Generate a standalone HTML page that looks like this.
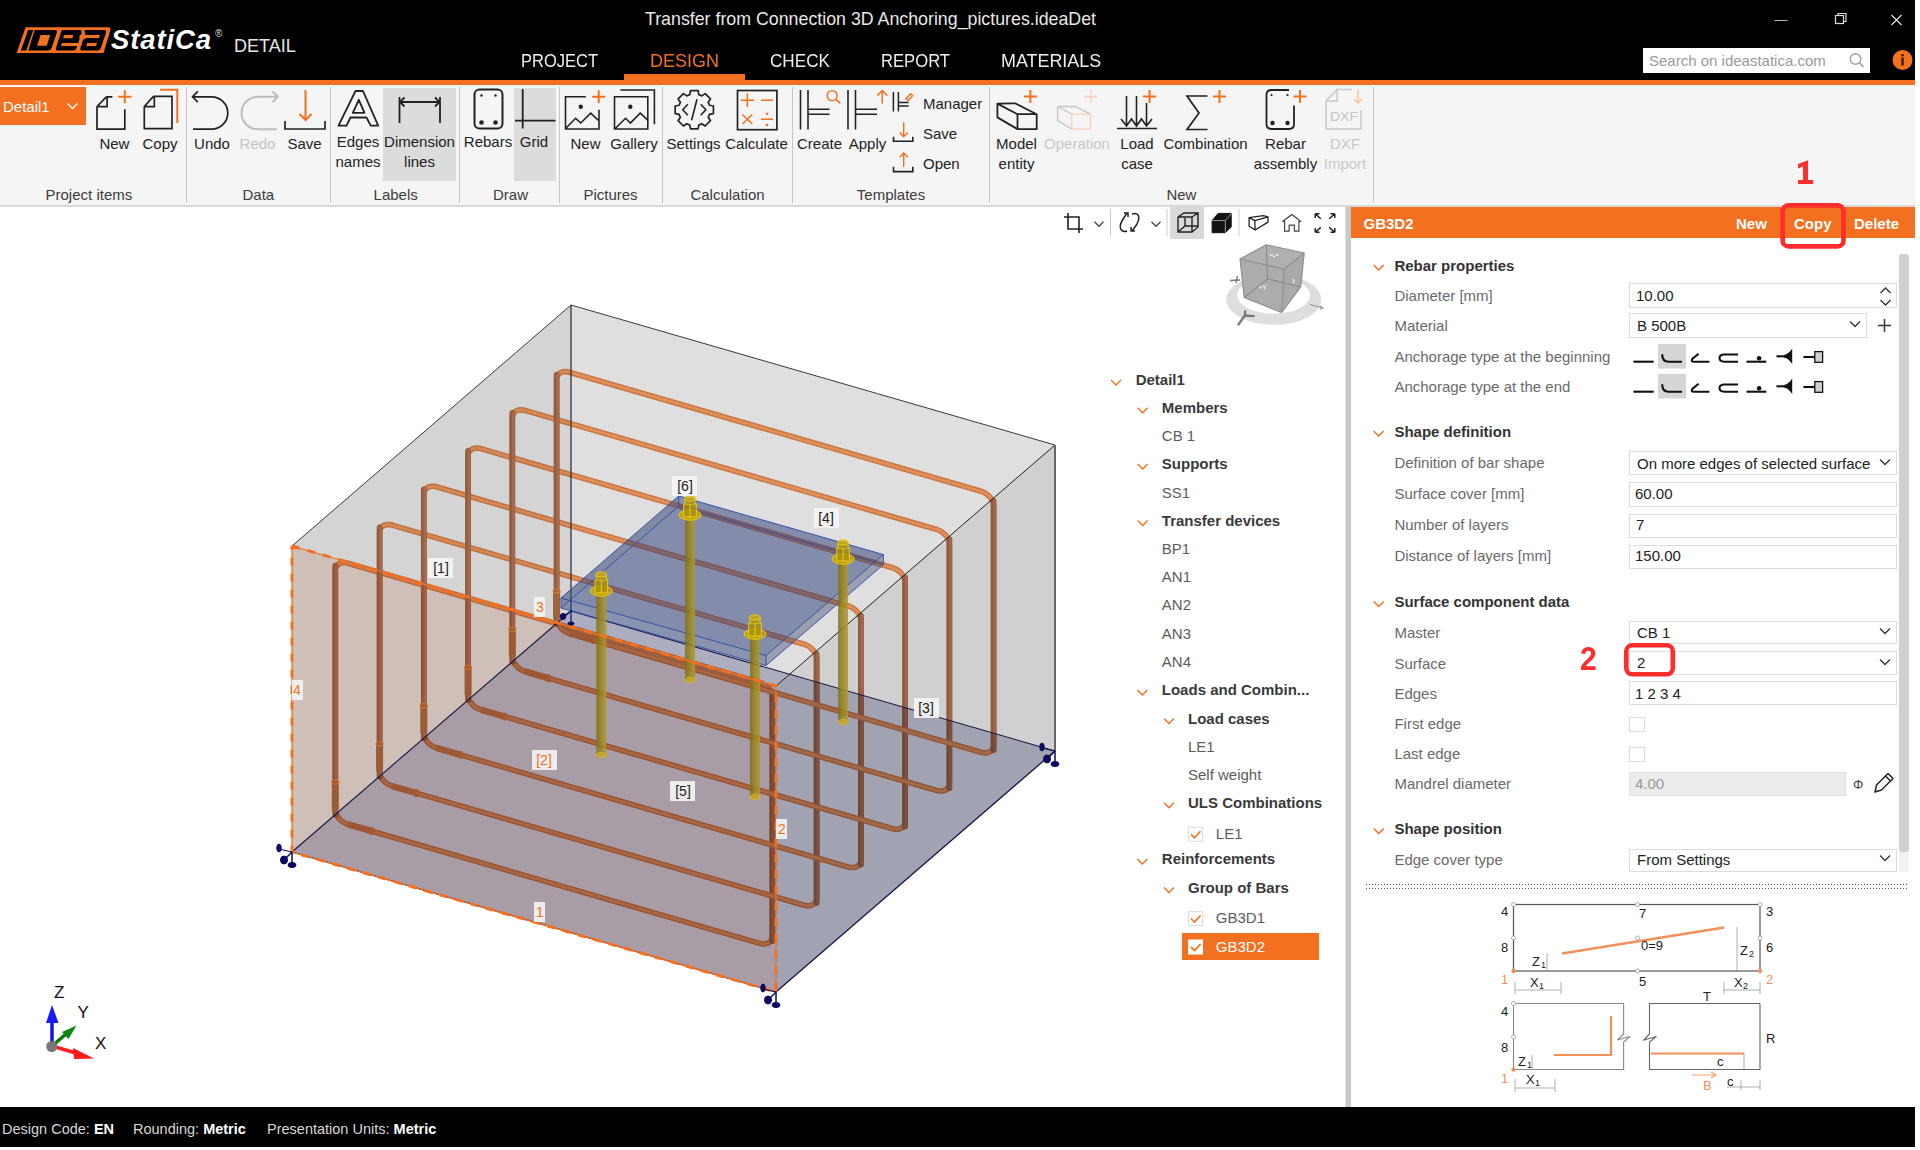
<!DOCTYPE html>
<html><head><meta charset="utf-8"><style>*{box-sizing:border-box;margin:0;padding:0}
html,body{width:1920px;height:1150px;overflow:hidden;background:#fff;font-family:"Liberation Sans",sans-serif}
.a{position:absolute}
.t{position:absolute;white-space:nowrap;line-height:1}
svg{overflow:visible}
</style></head><body>
<div class="a" style="left:0px;top:0px;width:1915px;height:80px;background:#000"></div>
<div class="a" style="left:0px;top:80px;width:1915px;height:5px;background:#f37021"></div>
<svg class="a" style="left:0;top:0" width="320" height="80" viewBox="0 0 320 80">
<path d="M25.6 27.2 L108.5 27.2 Q111.2 27.6 110.3 30.5 L103.5 53 L16.6 53 Z" fill="#f37021"/>
<g fill="#000">
<path d="M28.1 30 L33.3 30 L26.3 50.6 L20.9 50.6 Z"/>
<path d="M34.6 30 L54.8 30 Q57.6 30 56.8 32.8 L51.6 48 Q50.7 50.6 48 50.6 L28.3 50.6 Z"/>
<path d="M59.6 30 L79.6 30 Q82.3 30 81.5 32.8 L76.6 48 Q75.8 50.6 73 50.6 L58 50.6 Q55.2 50.6 56 47.8 L60.6 33.2 Q61.4 30.2 62 30 Z"/>
<path d="M84.4 30 L104 30 Q106.8 30 106 32.8 L100.9 48 Q100.1 50.6 97.4 50.6 L82.4 50.6 Q79.6 50.6 80.4 47.8 L82.6 41 Q83.4 38.4 86 38.4 Z"/>
</g>
<g fill="#f37021">
<path d="M40.6 35 L50.1 35 L46.8 45.7 L37.1 45.7 Z"/>
<path d="M64 35 L73.3 35 L72.3 38.2 L63 38.2 Z"/>
<path d="M62 43.1 L82 43.1 L81 46 L61 46 Z"/>
<path d="M80 35 L100 35 L99 38.1 L79 38.1 Z"/>
<path d="M87.2 43.1 L97 43.1 L96 46 L86.2 46 Z"/>
</g>
</svg>
<div class="t" style="left:111px;top:25.5px;font-size:27.5px;font-weight:bold;font-style:italic;color:#fff;letter-spacing:0.9px">StatiCa</div>
<div class="t" style="left:215px;top:28.5px;font-size:10px;color:#ddd">&#174;</div>
<div class="t" style="left:234.0px;top:36.8px;font-size:18px;color:#e6e6e6;">DETAIL</div>
<div class="t" style="left:645.0px;top:11.4px;font-size:17.8px;color:#e8e8e8;">Transfer from Connection 3D Anchoring_pictures.ideaDet</div>
<div class="t" style="left:521.0px;top:51.6px;font-size:18.5px;color:#eee;transform:scaleX(0.892);transform-origin:0 0">PROJECT</div>
<div class="t" style="left:650.0px;top:51.6px;font-size:18.5px;color:#f37021;transform:scaleX(0.973);transform-origin:0 0">DESIGN</div>
<div class="t" style="left:770.0px;top:51.6px;font-size:18.5px;color:#eee;transform:scaleX(0.926);transform-origin:0 0">CHECK</div>
<div class="t" style="left:881.0px;top:51.6px;font-size:18.5px;color:#eee;transform:scaleX(0.899);transform-origin:0 0">REPORT</div>
<div class="t" style="left:1001.0px;top:51.6px;font-size:18.5px;color:#eee;transform:scaleX(0.968);transform-origin:0 0">MATERIALS</div>
<div class="a" style="left:624px;top:74px;width:121px;height:6px;background:#f37021"></div>
<svg class="a" style="left:1760px;top:0" width="155" height="40">
<line x1="14.5" y1="20.5" x2="27.5" y2="20.5" stroke="#bbb" stroke-width="1"/>
<rect x="75.5" y="15.5" width="8" height="8" fill="none" stroke="#ddd" stroke-width="1.2"/>
<path d="M78 15.5 V13.5 H86 V21.5 H84" fill="none" stroke="#ddd" stroke-width="1.2"/>
<path d="M131.5 15 L141.5 25 M141.5 15 L131.5 25" stroke="#ddd" stroke-width="1.3"/>
</svg>
<div class="a" style="left:1643px;top:48px;width:227px;height:25px;background:#fff"></div>
<div class="t" style="left:1649.0px;top:53.3px;font-size:15px;color:#9a9a9a;">Search on ideastatica.com</div>
<svg class="a" style="left:1840px;top:48px" width="30" height="25">
<circle cx="15.5" cy="11" r="5.3" fill="none" stroke="#a0a0a0" stroke-width="1.4"/>
<line x1="19.3" y1="14.8" x2="23.5" y2="19" stroke="#a0a0a0" stroke-width="1.6"/>
</svg>
<svg class="a" style="left:1890px;top:48px" width="25" height="25">
<circle cx="12.5" cy="12" r="10" fill="#f37021"/>
<rect x="11.3" y="9.5" width="2.4" height="8" fill="#3a1a05"/>
<rect x="11.3" y="6" width="2.4" height="2.2" fill="#3a1a05"/>
</svg>
<div class="a" style="left:0px;top:85px;width:1915px;height:120px;background:#f5f5f5"></div>
<div class="a" style="left:0px;top:205px;width:1915px;height:2px;background:#d9d9d9"></div>
<div class="a" style="left:383px;top:88px;width:73px;height:93px;background:#dcdcdc"></div>
<div class="a" style="left:514px;top:88px;width:42px;height:93px;background:#dcdcdc"></div>
<div class="a" style="left:0px;top:87px;width:86px;height:38px;background:#f37021"></div>
<div class="t" style="left:3.0px;top:99.3px;font-size:15px;color:#fff;">Detail1</div>
<svg class="a" style="left:66px;top:100px" width="14" height="12"><path d="M1.5 3.5 L6.5 8.5 L11.5 3.5" fill="none" stroke="#fff" stroke-width="1.3"/></svg>
<div class="a" style="left:186px;top:87px;width:1px;height:116px;background:#c6c6c6"></div>
<div class="a" style="left:330px;top:87px;width:1px;height:116px;background:#c6c6c6"></div>
<div class="a" style="left:459px;top:87px;width:1px;height:116px;background:#c6c6c6"></div>
<div class="a" style="left:559px;top:87px;width:1px;height:116px;background:#c6c6c6"></div>
<div class="a" style="left:662px;top:87px;width:1px;height:116px;background:#c6c6c6"></div>
<div class="a" style="left:792px;top:87px;width:1px;height:116px;background:#c6c6c6"></div>
<div class="a" style="left:989px;top:87px;width:1px;height:116px;background:#c6c6c6"></div>
<div class="a" style="left:1373px;top:87px;width:1px;height:116px;background:#c6c6c6"></div>
<div class="t" style="left:64.4px;top:135.8px;width:100px;text-align:center;font-size:15px;color:#222;">New</div>
<div class="t" style="left:110.0px;top:135.8px;width:100px;text-align:center;font-size:15px;color:#222;">Copy</div>
<div class="t" style="left:162.0px;top:135.8px;width:100px;text-align:center;font-size:15px;color:#222;">Undo</div>
<div class="t" style="left:207.5px;top:135.8px;width:100px;text-align:center;font-size:15px;color:#c4c4c4;">Redo</div>
<div class="t" style="left:254.5px;top:135.8px;width:100px;text-align:center;font-size:15px;color:#222;">Save</div>
<div class="t" style="left:308.0px;top:133.8px;width:100px;text-align:center;font-size:15px;color:#222;">Edges</div>
<div class="t" style="left:369.5px;top:133.8px;width:100px;text-align:center;font-size:15px;color:#222;">Dimension</div>
<div class="t" style="left:438.0px;top:133.8px;width:100px;text-align:center;font-size:15px;color:#222;">Rebars</div>
<div class="t" style="left:484.0px;top:133.8px;width:100px;text-align:center;font-size:15px;color:#222;">Grid</div>
<div class="t" style="left:535.5px;top:135.8px;width:100px;text-align:center;font-size:15px;color:#222;">New</div>
<div class="t" style="left:584.0px;top:135.8px;width:100px;text-align:center;font-size:15px;color:#222;">Gallery</div>
<div class="t" style="left:643.5px;top:135.8px;width:100px;text-align:center;font-size:15px;color:#222;">Settings</div>
<div class="t" style="left:706.5px;top:135.8px;width:100px;text-align:center;font-size:15px;color:#222;">Calculate</div>
<div class="t" style="left:769.5px;top:135.8px;width:100px;text-align:center;font-size:15px;color:#222;">Create</div>
<div class="t" style="left:817.5px;top:135.8px;width:100px;text-align:center;font-size:15px;color:#222;">Apply</div>
<div class="t" style="left:966.5px;top:135.8px;width:100px;text-align:center;font-size:15px;color:#222;">Model</div>
<div class="t" style="left:1027.0px;top:135.8px;width:100px;text-align:center;font-size:15px;color:#c8c8c8;">Operation</div>
<div class="t" style="left:1087.0px;top:135.8px;width:100px;text-align:center;font-size:15px;color:#222;">Load</div>
<div class="t" style="left:1155.5px;top:135.8px;width:100px;text-align:center;font-size:15px;color:#222;">Combination</div>
<div class="t" style="left:1235.5px;top:135.8px;width:100px;text-align:center;font-size:15px;color:#222;">Rebar</div>
<div class="t" style="left:1295.0px;top:135.8px;width:100px;text-align:center;font-size:15px;color:#c8c8c8;">DXF</div>
<div class="t" style="left:308.0px;top:153.8px;width:100px;text-align:center;font-size:15px;color:#222;">names</div>
<div class="t" style="left:369.5px;top:153.8px;width:100px;text-align:center;font-size:15px;color:#222;">lines</div>
<div class="t" style="left:966.5px;top:155.8px;width:100px;text-align:center;font-size:15px;color:#222;">entity</div>
<div class="t" style="left:1087.0px;top:155.8px;width:100px;text-align:center;font-size:15px;color:#222;">case</div>
<div class="t" style="left:1235.5px;top:155.8px;width:100px;text-align:center;font-size:15px;color:#222;">assembly</div>
<div class="t" style="left:1295.0px;top:155.8px;width:100px;text-align:center;font-size:15px;color:#c8c8c8;">Import</div>
<div class="t" style="left:28.9px;top:187.0px;width:120px;text-align:center;font-size:15px;color:#3c3c3c;">Project items</div>
<div class="t" style="left:198.3px;top:187.0px;width:120px;text-align:center;font-size:15px;color:#3c3c3c;">Data</div>
<div class="t" style="left:335.7px;top:187.0px;width:120px;text-align:center;font-size:15px;color:#3c3c3c;">Labels</div>
<div class="t" style="left:450.5px;top:187.0px;width:120px;text-align:center;font-size:15px;color:#3c3c3c;">Draw</div>
<div class="t" style="left:550.5px;top:187.0px;width:120px;text-align:center;font-size:15px;color:#3c3c3c;">Pictures</div>
<div class="t" style="left:667.5px;top:187.0px;width:120px;text-align:center;font-size:15px;color:#3c3c3c;">Calculation</div>
<div class="t" style="left:831.0px;top:187.0px;width:120px;text-align:center;font-size:15px;color:#3c3c3c;">Templates</div>
<div class="t" style="left:1121.4px;top:187.0px;width:120px;text-align:center;font-size:15px;color:#3c3c3c;">New</div>
<div class="t" style="left:923.0px;top:95.8px;font-size:15px;color:#222;">Manager</div>
<div class="t" style="left:923.0px;top:125.8px;font-size:15px;color:#222;">Save</div>
<div class="t" style="left:923.0px;top:155.8px;font-size:15px;color:#222;">Open</div>
<svg class="a" style="left:0;top:0" width="1400" height="210" fill="none" stroke-linecap="butt">
<g stroke="#222" stroke-width="1.7">
 <path d="M97 106.6 L106.3 96.8 M97 106.6 H107.1 V96.8 M106.3 96.8 H112.4 M124.8 109.2 V129.2 H97 V106.6"/>
 <path d="M144.3 106.6 L153.4 96.4 M144.3 106.6 H154.3 V96.4 M153.4 96.4 H172 V128.7 H144.3 V106.6"/>
 <path d="M193 96.8 H211.6 A16.2 16.2 0 0 1 211.6 129.2 H193 M197.8 91.4 L192.5 96.8 L197.8 102.2"/>
 <path d="M285 121 V129 H325 V121"/>
 <path d="M338.5 125.7 L355.5 91 H363 L378.2 125.7 H370.7 L366.5 117.5 H350.5 L346.5 125.7 Z M352.8 112.8 L358.8 99.8 L364.5 112.8 Z" stroke-width="1.8" stroke-linejoin="round"/>
 <path d="M399.5 97 V123 M440 97 V123 M400 102 H439.5 M404.5 97.5 L400 102 L404.5 106.5 M435 97.5 L439.5 102 L435 106.5" stroke-width="1.8"/>
 <rect x="474.5" y="89.5" width="28" height="39" rx="5" stroke-width="2"/>
 <path d="M522.7 89 V128.5 M515 120.7 H555.5" stroke-width="1.8"/>
 <path d="M585.9 96.8 H565.5 V129 H599 V109.8 M565.6 128.5 L575.6 118.3 L580.8 123 L590.7 113.1 L598.5 120.4" stroke-width="1.6"/>
 <path d="M614.5 96.8 H647.8 V129 H614.5 Z M615.2 128.5 L625.6 118.3 L630.3 123 L640.2 113.1 L648 120.4 M620.4 90 H654.4 V124.3" stroke-width="1.6"/>
 <rect x="737.5" y="90.5" width="39.4" height="39.2"/>
 <path d="M800.5 90 V129.5 M808 90 V129.5 M808.5 109.3 H829.5 M808.5 114.3 H829.5" stroke-width="1.6"/>
 <path d="M848 90 V129.5 M855.5 90 V129.5 M856 109.3 H877 M856 114.3 H877" stroke-width="1.6"/>
 <path d="M893.4 92 V111.6 M898.4 92 V111.6 M898.9 102.6 H908.6 M898.9 106.1 H908.6" stroke-width="1.5"/>
 <path d="M893.5 136.8 V141.3 H912.8 V136.8 M893.5 166.8 V171.6 H912.8 V166.8" stroke-width="1.6"/>
 <path d="M997.4 103.6 L1015.2 103.3 L1036.7 114.2 V129.1 H1017.5 L997.4 117.4 Z M997.4 103.6 L1017.5 114.2 H1036.7 M1017.5 114.2 V129.1" stroke-width="1.8" stroke-linejoin="round"/>
 <path d="M1117 128.5 H1157 M1126.5 96 V126 M1136.5 96 V126 M1146.5 103 V126 M1121 119 L1126.5 126 L1131.5 119 L1136.5 126 L1141.5 119 L1146.5 126 L1152 119" stroke-width="1.6"/>
 <path d="M1207.5 96 H1187 L1199 113 L1187 129.5 H1207.5" stroke-width="1.7"/>
 <path d="M1289 90 H1271.5 Q1266.5 90 1266.5 95 V124 Q1266.5 129 1271.5 129 H1289 Q1294 129 1294 124 V105.5" stroke-width="1.8"/>
</g>
<g fill="#222"><circle cx="1271.5" cy="95" r="1.1"/><circle cx="1287.5" cy="95" r="1.1"/><circle cx="1272.5" cy="123" r="2.2"/><circle cx="1287.5" cy="123" r="2.2"/>
<circle cx="481.5" cy="95.5" r="1.2"/><circle cx="495.5" cy="95.5" r="1.2"/><circle cx="481.5" cy="122.5" r="2.3"/><circle cx="495.5" cy="122.5" r="2.3"/>
<circle cx="580.8" cy="106.7" r="2.2"/><circle cx="630.3" cy="106.7" r="2.2"/></g>
<g stroke="#bdbdbd" stroke-width="2"><path d="M277 129.2 H257.7 A16.2 16.2 0 0 1 257.7 96.8 H277.5 M272.5 91.4 L277.8 96.8 L272.5 102.2"/></g>
<g stroke="#f37021" stroke-width="2">
 <path d="M118.3 96.8 H131.4 M124.8 90.3 V103.3"/>
 <path d="M160 89.7 H177.3 V123"/>
 <path d="M305.5 90 V120 M299.5 114 L305.5 120 L311.5 114"/>
 <path d="M592.2 96.8 H605.2 M598.7 90.3 V103.3"/>
 <path d="M740.6 100.3 H754.1 M747.3 93.5 V107 M761 100.3 H773 M742.4 114.5 L752.3 124 M752.3 114.5 L742.4 124 M761 119.3 H773" stroke-width="1.5"/>
 <path d="M1023.9 96.5 H1036.9 M1030.4 90 V103" />
 <path d="M1143 96.5 H1156 M1149.5 90 V103"/>
 <path d="M1213 96.5 H1226 M1219.5 90 V103"/>
 <path d="M1293.5 96.5 H1306.5 M1300 90 V103"/>
 <path d="M882.2 90.5 V103.5 M877.2 95.6 L882.2 90.5 L887.4 95.6" stroke-width="1.5"/>
 <path d="M903.7 122.2 V136.8 M899.7 132.5 L903.7 136.8 L907.7 132.5 M903.7 153 V167 M899.7 157.3 L903.7 153 L907.7 157.3" stroke-width="1.4"/>
 <path d="M906 98.7 L910.5 93.8 L912.6 95.8 L908.2 100.6 Z" stroke-width="1.4"/>
</g>
<g fill="#f37021"><circle cx="767" cy="113.7" r="1.3"/><circle cx="767" cy="125" r="1.3"/></g>
<circle cx="832.2" cy="95.6" r="5" stroke="#f37021" stroke-width="1.4"/><line x1="835.9" y1="99.4" x2="840.4" y2="103.4" stroke="#f37021" stroke-width="1.5"/>
<g stroke="#c4c4c4" stroke-width="1.3"><path d="M1071.8 129.1 L1057.6 120.5 V106.5 H1075.4 L1090.5 114.2 M1057.6 106.5 L1071.8 114.2"/></g>
<g stroke="#f8d0b8" stroke-width="1.3"><path d="M1071.8 114.2 H1090.5 V129.1 H1071.8 Z" /><path d="M1084.4 96.5 H1097.4 M1090.9 90 V103"/></g>
<g stroke="#c9c9c9" stroke-width="1.5"><path d="M1337 89.5 H1352 M1326 101 L1337 89.5 V101 H1326 V129 H1361 V110"/></g>
<text x="1330" y="121" font-family="Liberation Sans" font-size="13" fill="#c4c4c4" stroke="none" textLength="28" lengthAdjust="spacingAndGlyphs">DXF</text>
<g stroke="#f8c0a0" stroke-width="1.5"><path d="M1358 90 V103 M1354 99 L1358 103 L1362 99"/></g>
</svg>
<svg class="a" style="left:0;top:0" width="800" height="210" fill="none">
<path d="M688.25 95.20 L689.76 94.66 L690.52 90.67 L698.08 90.67 L698.84 94.66 L700.35 95.20 L701.80 95.89 L705.16 93.60 L710.50 98.94 L708.21 102.30 L708.90 103.75 L709.44 105.26 L713.43 106.02 L713.43 113.58 L709.44 114.34 L708.90 115.85 L708.21 117.30 L710.50 120.66 L705.16 126.00 L701.80 123.71 L700.35 124.40 L698.84 124.94 L698.08 128.93 L690.52 128.93 L689.76 124.94 L688.25 124.40 L686.80 123.71 L683.44 126.00 L678.10 120.66 L680.39 117.30 L679.70 115.85 L679.16 114.34 L675.17 113.58 L675.17 106.02 L679.16 105.26 L679.70 103.75 L680.39 102.30 L678.10 98.94 L683.44 93.60 L686.80 95.89 Z" stroke="#222" stroke-width="1.7" stroke-linejoin="round"/>
<path d="M687.8 104.3 L682.8 109.8 L687.8 115.3 M700.8 104.3 L705.8 109.8 L700.8 115.3 M697.0 99.3 L691.5999999999999 120.3" stroke="#222" stroke-width="1.6"/>
</svg>
<div class="a" style="left:0px;top:207px;width:1345px;height:900px;background:#fff"></div>
<svg class="a" style="left:0;top:207px" width="1345" height="900" viewBox="0 207 1345 900">
<g style="isolation:isolate">
<path d="M335.3 570.7 L335.6 568.6 L336.3 566.7 L337.5 565.2 L339.0 563.9 L340.9 563.1 L343.1 562.7 L345.5 562.8 L347.9 563.3 L759.8 682.4 L762.3 683.3 L764.6 684.7 L766.8 686.3 L768.7 688.2 L770.3 690.3 L771.4 692.6 L772.2 694.9 L772.4 697.1 L772.4 936.1 L772.2 938.1 L771.4 940.0 L770.3 941.6 L768.7 942.8 L766.8 943.6 L764.6 944.0 L762.3 943.9 L759.8 943.4 L347.9 824.3 L345.5 823.4 L343.1 822.1 L340.9 820.4 L339.0 818.5 L337.5 816.4 L336.3 814.1 L335.6 811.9 L335.3 809.6 Z" fill="none" stroke="#e8874d" stroke-width="5.6" stroke-linejoin="round"/>
<path d="M335.3 570.7 L335.6 568.6 L336.3 566.7 L337.5 565.2 L339.0 563.9 L340.9 563.1 L343.1 562.7 L345.5 562.8 L347.9 563.3 L759.8 682.4 L762.3 683.3 L764.6 684.7 L766.8 686.3 L768.7 688.2 L770.3 690.3 L771.4 692.6 L772.2 694.9 L772.4 697.1 L772.4 936.1 L772.2 938.1 L771.4 940.0 L770.3 941.6 L768.7 942.8 L766.8 943.6 L764.6 944.0 L762.3 943.9 L759.8 943.4 L347.9 824.3 L345.5 823.4 L343.1 822.1 L340.9 820.4 L339.0 818.5 L337.5 816.4 L336.3 814.1 L335.6 811.9 L335.3 809.6 Z" fill="none" stroke="#ffa466" stroke-width="2.8" stroke-linejoin="round"/>
<path d="M335.3 814.6 L335.3 565.7" fill="none" stroke="#b0704c" stroke-width="5.8" stroke-linecap="round"/>
<path d="M336.3 814.6 L336.3 565.7" fill="none" stroke="#c88060" stroke-width="2.5" stroke-linecap="round"/>
<path d="M772.4 941.0 L772.4 692.1" fill="none" stroke="#b0704c" stroke-width="5.8" stroke-linecap="round"/>
<path d="M773.4 941.0 L773.4 692.1" fill="none" stroke="#c88060" stroke-width="2.5" stroke-linecap="round"/>
<path d="M335.3 809.6 L335.3 782.1" fill="none" stroke="#c07848" stroke-width="7"/>
<path d="M347.9 824.3 L371.9 831.2" fill="none" stroke="#f08c50" stroke-width="6.5"/>
<ellipse cx="371.9" cy="831.2" rx="2" ry="3.5" fill="none" stroke="#ff9040" stroke-width="1.2"/>
<ellipse cx="335.3" cy="782.1" rx="3.5" ry="2" fill="none" stroke="#ff9040" stroke-width="1.2"/>
<path d="M379.6 532.4 L379.8 530.4 L380.5 528.5 L381.7 526.9 L383.3 525.7 L385.2 524.9 L387.4 524.5 L389.7 524.6 L392.2 525.1 L804.1 644.2 L806.5 645.1 L808.9 646.4 L811.0 648.1 L813.0 650.0 L814.5 652.1 L815.7 654.4 L816.4 656.6 L816.6 658.9 L816.6 897.8 L816.4 899.9 L815.7 901.8 L814.5 903.3 L813.0 904.6 L811.0 905.4 L808.9 905.8 L806.5 905.7 L804.1 905.2 L392.2 786.1 L389.7 785.2 L387.4 783.8 L385.2 782.2 L383.3 780.3 L381.7 778.2 L380.5 775.9 L379.8 773.6 L379.6 771.4 Z" fill="none" stroke="#e8874d" stroke-width="5.6" stroke-linejoin="round"/>
<path d="M379.6 532.4 L379.8 530.4 L380.5 528.5 L381.7 526.9 L383.3 525.7 L385.2 524.9 L387.4 524.5 L389.7 524.6 L392.2 525.1 L804.1 644.2 L806.5 645.1 L808.9 646.4 L811.0 648.1 L813.0 650.0 L814.5 652.1 L815.7 654.4 L816.4 656.6 L816.6 658.9 L816.6 897.8 L816.4 899.9 L815.7 901.8 L814.5 903.3 L813.0 904.6 L811.0 905.4 L808.9 905.8 L806.5 905.7 L804.1 905.2 L392.2 786.1 L389.7 785.2 L387.4 783.8 L385.2 782.2 L383.3 780.3 L381.7 778.2 L380.5 775.9 L379.8 773.6 L379.6 771.4 Z" fill="none" stroke="#ffa466" stroke-width="2.8" stroke-linejoin="round"/>
<path d="M379.6 776.4 L379.6 527.5" fill="none" stroke="#b0704c" stroke-width="5.8" stroke-linecap="round"/>
<path d="M380.6 776.4 L380.6 527.5" fill="none" stroke="#c88060" stroke-width="2.5" stroke-linecap="round"/>
<path d="M816.6 902.8 L816.6 653.9" fill="none" stroke="#b0704c" stroke-width="5.8" stroke-linecap="round"/>
<path d="M817.6 902.8 L817.6 653.9" fill="none" stroke="#c88060" stroke-width="2.5" stroke-linecap="round"/>
<path d="M379.6 771.4 L379.6 743.9" fill="none" stroke="#c07848" stroke-width="7"/>
<path d="M392.2 786.1 L416.1 793.0" fill="none" stroke="#f08c50" stroke-width="6.5"/>
<ellipse cx="416.1" cy="793.0" rx="2" ry="3.5" fill="none" stroke="#ff9040" stroke-width="1.2"/>
<ellipse cx="379.6" cy="743.9" rx="3.5" ry="2" fill="none" stroke="#ff9040" stroke-width="1.2"/>
<path d="M423.8 494.2 L424.1 492.1 L424.8 490.3 L426.0 488.7 L427.5 487.5 L429.4 486.7 L431.6 486.3 L434.0 486.3 L436.4 486.8 L848.3 606.0 L850.8 606.9 L853.1 608.2 L855.3 609.9 L857.2 611.8 L858.8 613.9 L859.9 616.1 L860.6 618.4 L860.9 620.6 L860.9 859.6 L860.6 861.7 L859.9 863.6 L858.8 865.1 L857.2 866.3 L855.3 867.2 L853.1 867.5 L850.8 867.5 L848.3 867.0 L436.4 747.9 L434.0 746.9 L431.6 745.6 L429.4 744.0 L427.5 742.1 L426.0 739.9 L424.8 737.7 L424.1 735.4 L423.8 733.2 Z" fill="none" stroke="#e8874d" stroke-width="5.6" stroke-linejoin="round"/>
<path d="M423.8 494.2 L424.1 492.1 L424.8 490.3 L426.0 488.7 L427.5 487.5 L429.4 486.7 L431.6 486.3 L434.0 486.3 L436.4 486.8 L848.3 606.0 L850.8 606.9 L853.1 608.2 L855.3 609.9 L857.2 611.8 L858.8 613.9 L859.9 616.1 L860.6 618.4 L860.9 620.6 L860.9 859.6 L860.6 861.7 L859.9 863.6 L858.8 865.1 L857.2 866.3 L855.3 867.2 L853.1 867.5 L850.8 867.5 L848.3 867.0 L436.4 747.9 L434.0 746.9 L431.6 745.6 L429.4 744.0 L427.5 742.1 L426.0 739.9 L424.8 737.7 L424.1 735.4 L423.8 733.2 Z" fill="none" stroke="#ffa466" stroke-width="2.8" stroke-linejoin="round"/>
<path d="M423.8 738.2 L423.8 489.3" fill="none" stroke="#b0704c" stroke-width="5.8" stroke-linecap="round"/>
<path d="M424.8 738.2 L424.8 489.3" fill="none" stroke="#c88060" stroke-width="2.5" stroke-linecap="round"/>
<path d="M860.9 864.6 L860.9 615.7" fill="none" stroke="#b0704c" stroke-width="5.8" stroke-linecap="round"/>
<path d="M861.9 864.6 L861.9 615.7" fill="none" stroke="#c88060" stroke-width="2.5" stroke-linecap="round"/>
<path d="M423.8 733.2 L423.8 705.7" fill="none" stroke="#c07848" stroke-width="7"/>
<path d="M436.4 747.9 L460.4 754.8" fill="none" stroke="#f08c50" stroke-width="6.5"/>
<ellipse cx="460.4" cy="754.8" rx="2" ry="3.5" fill="none" stroke="#ff9040" stroke-width="1.2"/>
<ellipse cx="423.8" cy="705.7" rx="3.5" ry="2" fill="none" stroke="#ff9040" stroke-width="1.2"/>
<path d="M468.1 456.0 L468.3 453.9 L469.0 452.1 L470.2 450.5 L471.8 449.3 L473.7 448.4 L475.9 448.1 L478.2 448.1 L480.7 448.6 L892.6 567.8 L895.0 568.7 L897.4 570.0 L899.5 571.6 L901.5 573.6 L903.0 575.7 L904.2 577.9 L904.9 580.2 L905.1 582.4 L905.1 821.4 L904.9 823.5 L904.2 825.3 L903.0 826.9 L901.5 828.1 L899.5 828.9 L897.4 829.3 L895.0 829.3 L892.6 828.8 L480.7 709.6 L478.2 708.7 L475.9 707.4 L473.7 705.8 L471.8 703.8 L470.2 701.7 L469.0 699.5 L468.3 697.2 L468.1 695.0 Z" fill="none" stroke="#e8874d" stroke-width="5.6" stroke-linejoin="round"/>
<path d="M468.1 456.0 L468.3 453.9 L469.0 452.1 L470.2 450.5 L471.8 449.3 L473.7 448.4 L475.9 448.1 L478.2 448.1 L480.7 448.6 L892.6 567.8 L895.0 568.7 L897.4 570.0 L899.5 571.6 L901.5 573.6 L903.0 575.7 L904.2 577.9 L904.9 580.2 L905.1 582.4 L905.1 821.4 L904.9 823.5 L904.2 825.3 L903.0 826.9 L901.5 828.1 L899.5 828.9 L897.4 829.3 L895.0 829.3 L892.6 828.8 L480.7 709.6 L478.2 708.7 L475.9 707.4 L473.7 705.8 L471.8 703.8 L470.2 701.7 L469.0 699.5 L468.3 697.2 L468.1 695.0 Z" fill="none" stroke="#ffa466" stroke-width="2.8" stroke-linejoin="round"/>
<path d="M468.1 699.9 L468.1 451.0" fill="none" stroke="#b0704c" stroke-width="5.8" stroke-linecap="round"/>
<path d="M469.1 699.9 L469.1 451.0" fill="none" stroke="#c88060" stroke-width="2.5" stroke-linecap="round"/>
<path d="M905.1 826.4 L905.1 577.5" fill="none" stroke="#b0704c" stroke-width="5.8" stroke-linecap="round"/>
<path d="M906.1 826.4 L906.1 577.5" fill="none" stroke="#c88060" stroke-width="2.5" stroke-linecap="round"/>
<path d="M468.1 695.0 L468.1 667.4" fill="none" stroke="#c07848" stroke-width="7"/>
<path d="M480.7 709.6 L504.6 716.6" fill="none" stroke="#f08c50" stroke-width="6.5"/>
<ellipse cx="504.6" cy="716.6" rx="2" ry="3.5" fill="none" stroke="#ff9040" stroke-width="1.2"/>
<ellipse cx="468.1" cy="667.4" rx="3.5" ry="2" fill="none" stroke="#ff9040" stroke-width="1.2"/>
<path d="M512.3 417.8 L512.6 415.7 L513.3 413.8 L514.5 412.3 L516.0 411.0 L517.9 410.2 L520.1 409.8 L522.5 409.9 L524.9 410.4 L936.8 529.5 L939.3 530.5 L941.6 531.8 L943.8 533.4 L945.7 535.3 L947.3 537.5 L948.4 539.7 L949.1 542.0 L949.4 544.2 L949.4 783.2 L949.1 785.3 L948.4 787.1 L947.3 788.7 L945.7 789.9 L943.8 790.7 L941.6 791.1 L939.3 791.0 L936.8 790.5 L524.9 671.4 L522.5 670.5 L520.1 669.2 L517.9 667.5 L516.0 665.6 L514.5 663.5 L513.3 661.2 L512.6 659.0 L512.3 656.8 Z" fill="none" stroke="#e8874d" stroke-width="5.6" stroke-linejoin="round"/>
<path d="M512.3 417.8 L512.6 415.7 L513.3 413.8 L514.5 412.3 L516.0 411.0 L517.9 410.2 L520.1 409.8 L522.5 409.9 L524.9 410.4 L936.8 529.5 L939.3 530.5 L941.6 531.8 L943.8 533.4 L945.7 535.3 L947.3 537.5 L948.4 539.7 L949.1 542.0 L949.4 544.2 L949.4 783.2 L949.1 785.3 L948.4 787.1 L947.3 788.7 L945.7 789.9 L943.8 790.7 L941.6 791.1 L939.3 791.0 L936.8 790.5 L524.9 671.4 L522.5 670.5 L520.1 669.2 L517.9 667.5 L516.0 665.6 L514.5 663.5 L513.3 661.2 L512.6 659.0 L512.3 656.8 Z" fill="none" stroke="#ffa466" stroke-width="2.8" stroke-linejoin="round"/>
<path d="M512.3 661.7 L512.3 412.8" fill="none" stroke="#b0704c" stroke-width="5.8" stroke-linecap="round"/>
<path d="M513.3 661.7 L513.3 412.8" fill="none" stroke="#c88060" stroke-width="2.5" stroke-linecap="round"/>
<path d="M949.4 788.1 L949.4 539.2" fill="none" stroke="#b0704c" stroke-width="5.8" stroke-linecap="round"/>
<path d="M950.4 788.1 L950.4 539.2" fill="none" stroke="#c88060" stroke-width="2.5" stroke-linecap="round"/>
<path d="M512.3 656.8 L512.3 629.2" fill="none" stroke="#c07848" stroke-width="7"/>
<path d="M524.9 671.4 L548.9 678.3" fill="none" stroke="#f08c50" stroke-width="6.5"/>
<ellipse cx="548.9" cy="678.3" rx="2" ry="3.5" fill="none" stroke="#ff9040" stroke-width="1.2"/>
<ellipse cx="512.3" cy="629.2" rx="3.5" ry="2" fill="none" stroke="#ff9040" stroke-width="1.2"/>
<path d="M556.6 379.5 L556.8 377.5 L557.5 375.6 L558.7 374.0 L560.3 372.8 L562.2 372.0 L564.4 371.6 L566.7 371.7 L569.2 372.2 L981.1 491.3 L983.5 492.2 L985.9 493.5 L988.0 495.2 L990.0 497.1 L991.5 499.2 L992.7 501.5 L993.4 503.7 L993.6 506.0 L993.6 745.0 L993.4 747.0 L992.7 748.9 L991.5 750.5 L990.0 751.7 L988.0 752.5 L985.9 752.9 L983.5 752.8 L981.1 752.3 L569.2 633.2 L566.7 632.3 L564.4 631.0 L562.2 629.3 L560.3 627.4 L558.7 625.3 L557.5 623.0 L556.8 620.8 L556.6 618.5 Z" fill="none" stroke="#e8874d" stroke-width="5.6" stroke-linejoin="round"/>
<path d="M556.6 379.5 L556.8 377.5 L557.5 375.6 L558.7 374.0 L560.3 372.8 L562.2 372.0 L564.4 371.6 L566.7 371.7 L569.2 372.2 L981.1 491.3 L983.5 492.2 L985.9 493.5 L988.0 495.2 L990.0 497.1 L991.5 499.2 L992.7 501.5 L993.4 503.7 L993.6 506.0 L993.6 745.0 L993.4 747.0 L992.7 748.9 L991.5 750.5 L990.0 751.7 L988.0 752.5 L985.9 752.9 L983.5 752.8 L981.1 752.3 L569.2 633.2 L566.7 632.3 L564.4 631.0 L562.2 629.3 L560.3 627.4 L558.7 625.3 L557.5 623.0 L556.8 620.8 L556.6 618.5 Z" fill="none" stroke="#ffa466" stroke-width="2.8" stroke-linejoin="round"/>
<path d="M556.6 623.5 L556.6 374.6" fill="none" stroke="#b0704c" stroke-width="5.8" stroke-linecap="round"/>
<path d="M557.6 623.5 L557.6 374.6" fill="none" stroke="#c88060" stroke-width="2.5" stroke-linecap="round"/>
<path d="M993.6 749.9 L993.6 501.0" fill="none" stroke="#b0704c" stroke-width="5.8" stroke-linecap="round"/>
<path d="M994.6 749.9 L994.6 501.0" fill="none" stroke="#c88060" stroke-width="2.5" stroke-linecap="round"/>
<path d="M556.6 618.5 L556.6 591.0" fill="none" stroke="#c07848" stroke-width="7"/>
<path d="M569.2 633.2 L593.1 640.1" fill="none" stroke="#f08c50" stroke-width="6.5"/>
<ellipse cx="593.1" cy="640.1" rx="2" ry="3.5" fill="none" stroke="#ff9040" stroke-width="1.2"/>
<ellipse cx="556.6" cy="591.0" rx="3.5" ry="2" fill="none" stroke="#ff9040" stroke-width="1.2"/>
<polygon points="571.0,305.0 1055.0,445.0 1055.0,751.0 571.0,611.0" fill="#efefef" style="mix-blend-mode:multiply"/>
<polygon points="292.0,852.0 292.0,546.0 571.0,305.0 571.0,611.0" fill="#e3e3e3" style="mix-blend-mode:multiply"/>
<polygon points="292.0,852.0 776.0,992.0 1055.0,751.0 571.0,611.0" fill="#b9bacd" style="mix-blend-mode:multiply"/>
<polygon points="292.0,546.0 776.0,686.0 1055.0,445.0 571.0,305.0" fill="#eeeeee" style="mix-blend-mode:multiply"/>
<polygon points="776.0,686.0 1055.0,445.0 1055.0,751.0 776.0,992.0" fill="#dedede" style="mix-blend-mode:multiply"/>
<polygon points="292.0,546.0 776.0,686.0 776.0,992.0 292.0,852.0" fill="#e8d8d0" style="mix-blend-mode:multiply"/>
</g>
<path d="M292.0 546.0 L571.0 305.0 L1055.0 445.0" fill="none" stroke="#3a3a3a" stroke-width="1"/>
<path d="M1055.0 445.0 L776.0 686.0" fill="none" stroke="#222" stroke-width="1"/>
<path d="M571.0 305.0 L571.0 611.0" fill="none" stroke="#333" stroke-width="1.3"/>
<path d="M1055.0 445.0 L1055.0 751.0" fill="none" stroke="#666" stroke-width="2"/>
<path d="M571.0 611.0 L1055.0 751.0" fill="none" stroke="#16163c" stroke-width="1.1"/>
<path d="M292.0 852.0 L571.0 611.0" fill="none" stroke="#16163c" stroke-width="1.1"/>
<path d="M776.0 992.0 L1055.0 751.0" fill="none" stroke="#15154a" stroke-width="1.3"/>
<path d="M292.0 852.0 L776.0 992.0" fill="none" stroke="#15154a" stroke-width="1.2"/>
<polygon points="561.0,598.0 766.0,655.5 883.4,554.6 678.7,496.0" fill="rgb(40,60,120)" fill-opacity="0.50"/>
<polygon points="561.0,598.0 766.0,655.5 766.0,665.5 561.0,608.0" fill="rgb(40,60,120)" fill-opacity="0.47"/>
<polygon points="766.0,655.5 883.4,554.6 883.4,564.6 766.0,665.5" fill="rgb(60,70,110)" fill-opacity="0.42"/>
<polygon points="561.0,598.0 678.7,496.0 678.7,506.0 561.0,608.0" fill="rgb(120,120,130)" fill-opacity="0.15"/>
<path d="M561.0 598.0 L766.0 655.5 L883.4 554.6 L678.7 496.0 Z M561.0 608.0 L766.0 665.5 L883.4 564.6 L678.7 506.0 Z M561 598 V608 M766 655.5 V665.5 M883.4 554.6 V564.6 M678.7 496 V506" fill="none" stroke="#2a4aa8" stroke-width="1" stroke-opacity="0.9"/>
<defs><linearGradient id="rod" x1="0" x2="1" y1="0" y2="0"><stop offset="0" stop-color="#7e6e18"/><stop offset="0.6" stop-color="#a08c22"/><stop offset="1" stop-color="#b09a30"/></linearGradient></defs>
<rect x="685" y="515" width="10" height="165" fill="url(#rod)" fill-opacity="0.85"/>
<ellipse cx="690" cy="680" rx="5" ry="2.5" fill="#c8a828" fill-opacity="0.8" stroke="#d8b818" stroke-width="0.8"/>
<g stroke="#f2cc00" stroke-width="1"><ellipse cx="690" cy="515" rx="11" ry="5.2" fill="#c8aa10" fill-opacity="0.75"/><path d="M683.7 517 V504 H696.3 V517 Z" fill="#a89010" fill-opacity="0.8"/><path d="M690 518 V504" /><rect x="685" y="498.5" width="10" height="5.5" fill="#a89018" fill-opacity="0.8" stroke="none"/><path d="M685 504 V498.5 M695 504 V498.5" /><ellipse cx="690" cy="498.5" rx="5.2" ry="2.6" fill="#c8aa18" fill-opacity="0.8"/></g>
<rect x="596.3" y="591" width="10" height="164" fill="url(#rod)" fill-opacity="0.85"/>
<ellipse cx="601.3" cy="755" rx="5" ry="2.5" fill="#c8a828" fill-opacity="0.8" stroke="#d8b818" stroke-width="0.8"/>
<g stroke="#f2cc00" stroke-width="1"><ellipse cx="601.3" cy="591" rx="11" ry="5.2" fill="#c8aa10" fill-opacity="0.75"/><path d="M595.0 593 V580 H607.5999999999999 V593 Z" fill="#a89010" fill-opacity="0.8"/><path d="M601.3 594 V580" /><rect x="596.3" y="574.5" width="10" height="5.5" fill="#a89018" fill-opacity="0.8" stroke="none"/><path d="M596.3 580 V574.5 M606.3 580 V574.5" /><ellipse cx="601.3" cy="574.5" rx="5.2" ry="2.6" fill="#c8aa18" fill-opacity="0.8"/></g>
<rect x="838.1" y="559" width="10" height="163" fill="url(#rod)" fill-opacity="0.85"/>
<ellipse cx="843.1" cy="722" rx="5" ry="2.5" fill="#c8a828" fill-opacity="0.8" stroke="#d8b818" stroke-width="0.8"/>
<g stroke="#f2cc00" stroke-width="1"><ellipse cx="843.1" cy="559" rx="11" ry="5.2" fill="#c8aa10" fill-opacity="0.75"/><path d="M836.8000000000001 561 V548 H849.4 V561 Z" fill="#a89010" fill-opacity="0.8"/><path d="M843.1 562 V548" /><rect x="838.1" y="542.5" width="10" height="5.5" fill="#a89018" fill-opacity="0.8" stroke="none"/><path d="M838.1 548 V542.5 M848.1 548 V542.5" /><ellipse cx="843.1" cy="542.5" rx="5.2" ry="2.6" fill="#c8aa18" fill-opacity="0.8"/></g>
<rect x="750" y="634" width="10" height="163" fill="url(#rod)" fill-opacity="0.85"/>
<ellipse cx="755" cy="797" rx="5" ry="2.5" fill="#c8a828" fill-opacity="0.8" stroke="#d8b818" stroke-width="0.8"/>
<g stroke="#f2cc00" stroke-width="1"><ellipse cx="755" cy="634" rx="11" ry="5.2" fill="#c8aa10" fill-opacity="0.75"/><path d="M748.7 636 V623 H761.3 V636 Z" fill="#a89010" fill-opacity="0.8"/><path d="M755 637 V623" /><rect x="750" y="617.5" width="10" height="5.5" fill="#a89018" fill-opacity="0.8" stroke="none"/><path d="M750 623 V617.5 M760 623 V617.5" /><ellipse cx="755" cy="617.5" rx="5.2" ry="2.6" fill="#c8aa18" fill-opacity="0.8"/></g>
<path d="M292.0 546.0 L776.0 686.0 L776.0 992.0 L292.0 852.0 L292.0 546.0" fill="none" stroke="#f37021" stroke-width="1.3"/>
<path d="M292.0 546.0 L776.0 686.0 L776.0 992.0 L292.0 852.0 L292.0 546.0" fill="none" stroke="#f37021" stroke-width="3" stroke-dasharray="8 8"/>
<g fill="#0a0a60" stroke="#0a0a60"><line x1="292.0" y1="852.0" x2="292.0" y2="865.0" stroke-width="1.5"/><ellipse cx="292.0" cy="865.0" rx="4" ry="2.5"/><line x1="292.0" y1="852.0" x2="285.0" y2="859.0" stroke-width="1.5"/><ellipse cx="284.0" cy="860.0" rx="3.5" ry="4"/><line x1="292.0" y1="852.0" x2="279.0" y2="849.0" stroke-width="1"/><ellipse cx="279.0" cy="848.0" rx="2.2" ry="4"/></g>
<g fill="#0a0a60" stroke="#0a0a60"><line x1="776.0" y1="992.0" x2="776.0" y2="1005.0" stroke-width="1.5"/><ellipse cx="776.0" cy="1005.0" rx="4" ry="2.5"/><line x1="776.0" y1="992.0" x2="769.0" y2="999.0" stroke-width="1.5"/><ellipse cx="768.0" cy="1000.0" rx="3.5" ry="4"/><line x1="776.0" y1="992.0" x2="763.0" y2="989.0" stroke-width="1"/><ellipse cx="763.0" cy="988.0" rx="2.2" ry="4"/></g>
<g fill="#0a0a60" stroke="#0a0a60"><line x1="1055.0" y1="751.0" x2="1055.0" y2="764.0" stroke-width="1.5"/><ellipse cx="1055.0" cy="764.0" rx="4" ry="2.5"/><line x1="1055.0" y1="751.0" x2="1048.0" y2="758.0" stroke-width="1.5"/><ellipse cx="1047.0" cy="759.0" rx="3.5" ry="4"/><line x1="1055.0" y1="751.0" x2="1042.0" y2="748.0" stroke-width="1"/><ellipse cx="1042.0" cy="747.0" rx="2.2" ry="4"/></g>
<g fill="#0a0a60" stroke="#0a0a60"><line x1="571.0" y1="611.0" x2="571.0" y2="623.0" stroke-width="1.2"/><ellipse cx="571.0" cy="623.5" rx="3" ry="1.5"/><ellipse cx="563.0" cy="616.5" rx="2.8" ry="3"/><line x1="571.0" y1="611.0" x2="563.0" y2="616.0" stroke-width="1"/></g>
</svg>
<div class="a" style="left:428px;top:558px;width:25px;height:20px;background:rgba(244,244,244,0.92)"></div>
<div class="t" style="left:428.5px;top:561.3px;width:25px;text-align:center;font-size:14px;color:#222;">[1]</div>
<div class="a" style="left:532px;top:750px;width:25px;height:20px;background:rgba(244,244,244,0.92)"></div>
<div class="t" style="left:531.5px;top:753.3px;width:25px;text-align:center;font-size:14px;color:#f37021;">[2]</div>
<div class="a" style="left:914px;top:698px;width:25px;height:20px;background:rgba(244,244,244,0.92)"></div>
<div class="t" style="left:913.5px;top:701.3px;width:25px;text-align:center;font-size:14px;color:#222;">[3]</div>
<div class="a" style="left:814px;top:508px;width:25px;height:20px;background:rgba(244,244,244,0.92)"></div>
<div class="t" style="left:813.5px;top:511.3px;width:25px;text-align:center;font-size:14px;color:#222;">[4]</div>
<div class="a" style="left:670px;top:781px;width:25px;height:20px;background:rgba(244,244,244,0.92)"></div>
<div class="t" style="left:670.5px;top:784.3px;width:25px;text-align:center;font-size:14px;color:#222;">[5]</div>
<div class="a" style="left:672px;top:476px;width:25px;height:20px;background:rgba(244,244,244,0.92)"></div>
<div class="t" style="left:672.5px;top:478.8px;width:25px;text-align:center;font-size:14px;color:#222;">[6]</div>
<div class="a" style="left:534px;top:902px;width:11px;height:20px;background:rgba(244,244,244,0.92)"></div>
<div class="t" style="left:534.5px;top:905.3px;width:11px;text-align:center;font-size:14px;color:#f37021;">1</div>
<div class="a" style="left:776px;top:819px;width:11px;height:20px;background:rgba(244,244,244,0.92)"></div>
<div class="t" style="left:776.5px;top:822.3px;width:11px;text-align:center;font-size:14px;color:#f37021;">2</div>
<div class="a" style="left:534px;top:597px;width:11px;height:20px;background:rgba(244,244,244,0.92)"></div>
<div class="t" style="left:534.5px;top:600.3px;width:11px;text-align:center;font-size:14px;color:#f37021;">3</div>
<div class="a" style="left:292px;top:680px;width:11px;height:20px;background:rgba(244,244,244,0.92)"></div>
<div class="t" style="left:291.5px;top:683.3px;width:11px;text-align:center;font-size:14px;color:#f37021;">4</div>
<div class="a" style="left:1182px;top:933px;width:137px;height:27px;background:#f37021"></div>
<div class="t" style="left:1135.7px;top:372.2px;font-size:15px;color:#3a3a3a;font-weight:bold;">Detail1</div>
<div class="t" style="left:1161.8px;top:400.1px;font-size:15px;color:#3a3a3a;font-weight:bold;">Members</div>
<div class="t" style="left:1161.8px;top:428.3px;font-size:15px;color:#5c5c5c;">CB 1</div>
<div class="t" style="left:1161.8px;top:456.4px;font-size:15px;color:#3a3a3a;font-weight:bold;">Supports</div>
<div class="t" style="left:1161.8px;top:484.7px;font-size:15px;color:#5c5c5c;">SS1</div>
<div class="t" style="left:1161.8px;top:512.8px;font-size:15px;color:#3a3a3a;font-weight:bold;">Transfer devices</div>
<div class="t" style="left:1161.8px;top:540.8px;font-size:15px;color:#5c5c5c;">BP1</div>
<div class="t" style="left:1161.8px;top:569.4px;font-size:15px;color:#5c5c5c;">AN1</div>
<div class="t" style="left:1161.8px;top:597.3px;font-size:15px;color:#5c5c5c;">AN2</div>
<div class="t" style="left:1161.8px;top:625.8px;font-size:15px;color:#5c5c5c;">AN3</div>
<div class="t" style="left:1161.8px;top:654.3px;font-size:15px;color:#5c5c5c;">AN4</div>
<div class="t" style="left:1161.8px;top:682.2px;font-size:15px;color:#3a3a3a;font-weight:bold;">Loads and Combin...</div>
<div class="t" style="left:1188.0px;top:710.8px;font-size:15px;color:#3a3a3a;font-weight:bold;">Load cases</div>
<div class="t" style="left:1188.0px;top:739.2px;font-size:15px;color:#5c5c5c;">LE1</div>
<div class="t" style="left:1188.0px;top:767.0px;font-size:15px;color:#5c5c5c;">Self weight</div>
<div class="t" style="left:1188.0px;top:795.0px;font-size:15px;color:#3a3a3a;font-weight:bold;">ULS Combinations</div>
<div class="t" style="left:1215.8px;top:826.1px;font-size:15px;color:#5c5c5c;">LE1</div>
<div class="t" style="left:1161.8px;top:851.2px;font-size:15px;color:#3a3a3a;font-weight:bold;">Reinforcements</div>
<div class="t" style="left:1188.0px;top:879.8px;font-size:15px;color:#3a3a3a;font-weight:bold;">Group of Bars</div>
<div class="t" style="left:1215.8px;top:910.3px;font-size:15px;color:#5c5c5c;">GB3D1</div>
<div class="t" style="left:1215.8px;top:938.8px;font-size:15px;color:#fff;">GB3D2</div>
<svg class="a" style="left:0;top:0" width="1345" height="1000"><path d="M1111 379.9 L1116 384.9 L1121 379.9" fill="none" stroke="#f37021" stroke-width="1.4"/><path d="M1137.6 407.8 L1142.6 412.8 L1147.6 407.8" fill="none" stroke="#f37021" stroke-width="1.4"/><path d="M1137.6 464.1 L1142.6 469.1 L1147.6 464.1" fill="none" stroke="#f37021" stroke-width="1.4"/><path d="M1137.6 520.5 L1142.6 525.5 L1147.6 520.5" fill="none" stroke="#f37021" stroke-width="1.4"/><path d="M1137.3 689.9 L1142.3 694.9 L1147.3 689.9" fill="none" stroke="#f37021" stroke-width="1.4"/><path d="M1164 718.5 L1169 723.5 L1174 718.5" fill="none" stroke="#f37021" stroke-width="1.4"/><path d="M1164 802.7 L1169 807.7 L1174 802.7" fill="none" stroke="#f37021" stroke-width="1.4"/><path d="M1137.3 858.9 L1142.3 863.9 L1147.3 858.9" fill="none" stroke="#f37021" stroke-width="1.4"/><path d="M1164 887.5 L1169 892.5 L1174 887.5" fill="none" stroke="#f37021" stroke-width="1.4"/><rect x="1188.5" y="827.3" width="14" height="14" fill="#fff" stroke="#ddd" stroke-width="1"/><path d="M1191 834.3 L1194.5 837.8 L1200.5 831.3" fill="none" stroke="#f37021" stroke-width="1.6"/><rect x="1188.5" y="911.5" width="14" height="14" fill="#fff" stroke="#ddd" stroke-width="1"/><path d="M1191 918.5 L1194.5 922.0 L1200.5 915.5" fill="none" stroke="#f37021" stroke-width="1.6"/><rect x="1188" y="939.5" width="15" height="15" fill="#fff"/><path d="M1191 947 L1194.5 950.5 L1200.5 944" fill="none" stroke="#f37021" stroke-width="1.8"/><rect x="1170" y="207" width="34" height="32" fill="#d9d9d9"/><g fill="none" stroke="#222" stroke-width="1.6"><path d="M1068 213 V229 H1083 M1064 217 H1079 V233"/><path d="M1094.5 221.75 L1099 226.25 L1103.5 221.75" fill="none" stroke="#444" stroke-width="1.3"/><path d="M1127 213 L1122.5 220 Q1119 226 1121 229.5 Q1123 232.5 1127 231 M1124 213 H1128 V217 M1132 231 L1137 224 Q1140 218 1138 215 Q1136 212.5 1132 214 M1135 231 H1131 V227" stroke-width="1.5"/><path d="M1151.5 221.75 L1156 226.25 L1160.5 221.75" fill="none" stroke="#444" stroke-width="1.3"/><path d="M1178 217 L1184 213 H1198 V227 L1192 232 H1178 Z M1178 217 H1192 V232 M1192 217 L1198 213 M1178 232 L1185 226 M1185 218 V226 H1198" stroke-width="1.4"/><path d="M1212.1 220.6 L1218.1 213.4 H1231.2 V227 L1225.3 232.7 H1212.1 Z" fill="#111" stroke="#111" stroke-width="1"/><path d="M1212.1 220.6 H1225.3 V232.7 M1225.3 220.6 L1231.2 213.8" stroke="#aaa" stroke-width="0.9"/><path d="M1249.1 217.6 L1263.4 215.7 L1268 216.8 V222.1 L1255.1 230 L1249.1 226.3 Z M1249.1 217.6 L1254.8 220.6 L1268 216.8 M1254.8 220.6 L1255.1 230" stroke-width="1.3" stroke-linejoin="round"/><path d="M1282.6 221.4 L1291.8 214.6 L1300.8 221.4 H1298.9 V231.2 H1294.4 V225.1 H1289.1 V231.2 H1284.6 V221.4 Z" stroke="#444" stroke-width="1.2" stroke-linejoin="round"/><path d="M1315.2 213.8 L1320.8 218.7 M1315.2 213.8 V218 M1315.2 213.8 H1319.5 M1334.8 213.8 L1329.2 218.7 M1334.8 213.8 V218 M1334.8 213.8 H1330.5 M1315.2 232.3 L1320.8 227.4 M1315.2 232.3 V228 M1315.2 232.3 H1319.5 M1334.8 232.3 L1329.2 227.4 M1334.8 232.3 V228 M1334.8 232.3 H1330.5" stroke-width="1.5"/></g><line x1="1110.5" y1="209" x2="1110.5" y2="236" stroke="#ccc" stroke-width="1"/><line x1="1167" y1="209" x2="1167" y2="236" stroke="#ccc" stroke-width="1"/><line x1="1239" y1="209" x2="1239" y2="236" stroke="#ccc" stroke-width="1"/><ellipse cx="1273.8" cy="299.6" rx="47.5" ry="25.2" fill="#dedede"/><ellipse cx="1273.6" cy="295.2" rx="36.4" ry="18.4" fill="#fff"/><polygon points="1240,259 1266.3,244.7 1304.2,253 1284.2,269.2" fill="#b0b0b0"/><polygon points="1240,259 1284.2,269.2 1281.7,312.5 1244.2,297.5" fill="#acacac"/><polygon points="1284.2,269.2 1304.2,253 1300.8,286.7 1281.7,312.5" fill="#aaaaaa"/><path d="M1240 259 L1266.3 244.7 L1304.2 253 L1300.8 286.7 L1281.7 312.5 L1244.2 297.5 Z M1240 259 L1284.2 269.2 L1304.2 253 M1284.2 269.2 L1281.7 312.5 M1266.3 244.7 L1267.5 279 L1244.2 297.5 M1267.5 279 L1300.8 286.7" fill="none" stroke="#8c8c8c" stroke-width="1.1" stroke-linejoin="round"/><text x="1258.5" y="290" font-family="Liberation Sans" font-size="6.5" fill="#fff">+Y</text><path d="M1269.5 255 H1273 M1275 255 H1279 M1273 256.5 H1275" stroke="#fff" stroke-width="1"/><path d="M1293 279 Q1295 281 1293 283.5" fill="none" stroke="#fff" stroke-width="1"/><path d="M1230 280.5 L1240 280 M1237.5 276 L1236 283" stroke="#777" stroke-width="1.3"/><path d="M1310 304.5 L1323 308 M1320 306 L1323 308 L1320 309.5" fill="none" stroke="#999" stroke-width="1.1"/><path d="M1238.5 324.5 L1244.8 315.5 M1244.8 315.5 L1245.2 311.5 M1244.8 315.5 L1253.8 316.2" stroke="#7a7a7a" stroke-width="2.3" stroke-linecap="round"/><line x1="52" y1="1046" x2="52" y2="1022" stroke="#1010ff" stroke-width="3.5"/><polygon points="46,1023 58.5,1023 52,1005" fill="#1818ff"/><line x1="52" y1="1046" x2="66" y2="1034" stroke="#0a7a0a" stroke-width="3.5"/><polygon points="62,1032 68.5,1039 76.5,1025.6" fill="#0e870e"/><line x1="52" y1="1046" x2="76" y2="1053" stroke="#ff2020" stroke-width="3.5"/><polygon points="73,1048 74,1059 94,1058.5" fill="#ff1a1a"/><circle cx="51.7" cy="1046.5" r="5.5" fill="#777"/></svg>
<div class="t" style="left:54.0px;top:983.8px;font-size:17px;color:#111;">Z</div>
<div class="t" style="left:77.5px;top:1004.4px;font-size:17px;color:#111;">Y</div>
<div class="t" style="left:95.0px;top:1035.3px;font-size:17px;color:#111;">X</div>
<div class="a" style="left:1345px;top:207px;width:6px;height:900px;background:#c9c9c9;border-left:1px solid #e0e0e0"></div>
<div class="a" style="left:1351px;top:207px;width:564px;height:31px;background:#f37021"></div>
<div class="t" style="left:1363.5px;top:216.3px;font-size:15px;color:#fff;font-weight:bold;">GB3D2</div>
<div class="t" style="left:1736.0px;top:216.3px;font-size:15px;color:#fff;font-weight:bold;">New</div>
<div class="t" style="left:1794.0px;top:216.3px;font-size:15px;color:#fff;font-weight:bold;">Copy</div>
<div class="t" style="left:1854.0px;top:216.3px;font-size:15px;color:#fff;font-weight:bold;">Delete</div>
<div class="a" style="left:1899px;top:254px;width:10px;height:598px;background:#d0d0d0;border-radius:3px"></div>
<div class="a" style="left:1899px;top:852px;width:10px;height:20px;background:#f2f2f2"></div>
<div class="t" style="left:1394.4px;top:257.8px;font-size:15px;color:#333;font-weight:bold;">Rebar properties</div>
<div class="t" style="left:1394.4px;top:423.8px;font-size:15px;color:#333;font-weight:bold;">Shape definition</div>
<div class="t" style="left:1394.4px;top:594.2px;font-size:15px;color:#333;font-weight:bold;">Surface component data</div>
<div class="t" style="left:1394.4px;top:821.4px;font-size:15px;color:#333;font-weight:bold;">Shape position</div>
<div class="t" style="left:1394.4px;top:287.6px;font-size:15px;color:#6a6a6a;">Diameter [mm]</div>
<div class="t" style="left:1394.4px;top:317.6px;font-size:15px;color:#6a6a6a;">Material</div>
<div class="t" style="left:1394.4px;top:348.6px;font-size:15px;color:#6a6a6a;">Anchorage type at the beginning</div>
<div class="t" style="left:1394.4px;top:378.6px;font-size:15px;color:#6a6a6a;">Anchorage type at the end</div>
<div class="t" style="left:1394.4px;top:455.4px;font-size:15px;color:#6a6a6a;">Definition of bar shape</div>
<div class="t" style="left:1394.4px;top:486.1px;font-size:15px;color:#6a6a6a;">Surface cover [mm]</div>
<div class="t" style="left:1394.4px;top:517.1px;font-size:15px;color:#6a6a6a;">Number of layers</div>
<div class="t" style="left:1394.4px;top:548.1px;font-size:15px;color:#6a6a6a;">Distance of layers [mm]</div>
<div class="t" style="left:1394.4px;top:625.2px;font-size:15px;color:#6a6a6a;">Master</div>
<div class="t" style="left:1394.4px;top:655.6px;font-size:15px;color:#6a6a6a;">Surface</div>
<div class="t" style="left:1394.4px;top:685.6px;font-size:15px;color:#6a6a6a;">Edges</div>
<div class="t" style="left:1394.4px;top:715.6px;font-size:15px;color:#6a6a6a;">First edge</div>
<div class="t" style="left:1394.4px;top:745.6px;font-size:15px;color:#6a6a6a;">Last edge</div>
<div class="t" style="left:1394.4px;top:775.6px;font-size:15px;color:#6a6a6a;">Mandrel diameter</div>
<div class="t" style="left:1394.4px;top:851.6px;font-size:15px;color:#6a6a6a;">Edge cover type</div>
<div class="a" style="left:1629px;top:283px;width:268px;height:25px;background:#fff;border:1px solid #dcdcdc"></div>
<div class="t" style="left:1636.0px;top:287.8px;font-size:15px;color:#222;">10.00</div>
<div class="a" style="left:1629px;top:313px;width:238px;height:25px;background:#fff;border:1px solid #dcdcdc"></div>
<div class="t" style="left:1637.0px;top:317.8px;font-size:15px;color:#222;">B 500B</div>
<div class="a" style="left:1629px;top:451px;width:268px;height:24px;background:#fff;border:1px solid #dcdcdc"></div>
<div class="t" style="left:1637.0px;top:455.6px;font-size:15px;color:#222;">On more edges of selected surface</div>
<div class="a" style="left:1629px;top:482px;width:268px;height:25px;background:#fff;border:1px solid #dcdcdc"></div>
<div class="t" style="left:1635.0px;top:486.3px;font-size:15px;color:#222;">60.00</div>
<div class="a" style="left:1629px;top:514px;width:268px;height:24px;background:#fff;border:1px solid #dcdcdc"></div>
<div class="t" style="left:1636.0px;top:517.3px;font-size:15px;color:#222;">7</div>
<div class="a" style="left:1629px;top:545px;width:268px;height:24px;background:#fff;border:1px solid #dcdcdc"></div>
<div class="t" style="left:1635.0px;top:548.3px;font-size:15px;color:#222;">150.00</div>
<div class="a" style="left:1629px;top:621px;width:268px;height:23px;background:#fff;border:1px solid #dcdcdc"></div>
<div class="t" style="left:1637.0px;top:624.8px;font-size:15px;color:#222;">CB 1</div>
<div class="a" style="left:1629px;top:651px;width:268px;height:24px;background:#fff;border:1px solid #dcdcdc"></div>
<div class="t" style="left:1637.0px;top:654.8px;font-size:15px;color:#222;">2</div>
<div class="a" style="left:1629px;top:681px;width:268px;height:24px;background:#fff;border:1px solid #dcdcdc"></div>
<div class="t" style="left:1635.0px;top:685.8px;font-size:15px;color:#222;">1 2 3 4</div>
<div class="a" style="left:1629px;top:717px;width:16px;height:15px;background:#fff;border:1px solid #dcdcdc"></div>
<div class="a" style="left:1629px;top:747px;width:16px;height:15px;background:#fff;border:1px solid #dcdcdc"></div>
<div class="a" style="left:1629px;top:772px;width:217px;height:24px;background:#ececec;border:1px solid #e0e0e0"></div>
<div class="t" style="left:1635.0px;top:775.8px;font-size:15px;color:#9a9a9a;">4.00</div>
<div class="t" style="left:1853.0px;top:777.7px;font-size:13px;color:#444;">&#934;</div>
<div class="a" style="left:1629px;top:849px;width:268px;height:23px;background:#fff;border:1px solid #dcdcdc"></div>
<div class="t" style="left:1637.0px;top:851.8px;font-size:15px;color:#222;">From Settings</div>
<svg class="a" style="left:0;top:0" width="1920" height="1150"><path d="M1373.7 265.0 L1378.7 270.0 L1383.7 265.0" fill="none" stroke="#f37021" stroke-width="1.4"/><path d="M1373.7 431.0 L1378.7 436.0 L1383.7 431.0" fill="none" stroke="#f37021" stroke-width="1.4"/><path d="M1373.7 601.4 L1378.7 606.4 L1383.7 601.4" fill="none" stroke="#f37021" stroke-width="1.4"/><path d="M1373.7 828.6 L1378.7 833.6 L1383.7 828.6" fill="none" stroke="#f37021" stroke-width="1.4"/><path d="M1880.5 293 L1885.5 288 L1890.5 293 M1880.5 300 L1885.5 305 L1890.5 300" fill="none" stroke="#333" stroke-width="1.4"/><path d="M1850 321.5 L1855 326.5 L1860 321.5" fill="none" stroke="#333" stroke-width="1.3"/><path d="M1878 325.5 H1891 M1884.5 319 V332" stroke="#333" stroke-width="1.5"/><rect x="1658" y="344" width="28" height="24.5" fill="#d6d6d6"/><g fill="none" stroke="#111" stroke-width="2.1"><path d="M1633.4 361.7 H1653.7"/><path d="M1662.2 354.2 Q1662.2 361.7 1668.5 361.7 H1682"/><path d="M1709.4 361.7 H1694 Q1690.5 361.7 1692.5 358.7 L1698.6 353.7"/><path d="M1738.1 354.5 H1724.4 Q1719.5 354.5 1719.5 358.09999999999997 Q1719.5 361.7 1724.4 361.7 H1738.1"/><path d="M1746.5 361.7 H1766.3"/><path d="M1776.5 356.3 H1786"/><path d="M1803.4 357.0 H1814.8"/></g><circle cx="1759.1" cy="358.3" r="2.3" fill="#111"/><path d="M1784 355.09999999999997 Q1789 353.7 1792.2 348.5 V364.09999999999997 Q1789 358.7 1784 357.5 Z" fill="#111"/><rect x="1814.8" y="351.59999999999997" width="7.8" height="10.7" fill="#d0d0d0" stroke="#111" stroke-width="1.3"/><rect x="1658" y="374" width="28" height="24.5" fill="#d6d6d6"/><g fill="none" stroke="#111" stroke-width="2.1"><path d="M1633.4 391.7 H1653.7"/><path d="M1662.2 384.2 Q1662.2 391.7 1668.5 391.7 H1682"/><path d="M1709.4 391.7 H1694 Q1690.5 391.7 1692.5 388.7 L1698.6 383.7"/><path d="M1738.1 384.5 H1724.4 Q1719.5 384.5 1719.5 388.09999999999997 Q1719.5 391.7 1724.4 391.7 H1738.1"/><path d="M1746.5 391.7 H1766.3"/><path d="M1776.5 386.3 H1786"/><path d="M1803.4 387.0 H1814.8"/></g><circle cx="1759.1" cy="388.3" r="2.3" fill="#111"/><path d="M1784 385.09999999999997 Q1789 383.7 1792.2 378.5 V394.09999999999997 Q1789 388.7 1784 387.5 Z" fill="#111"/><rect x="1814.8" y="381.59999999999997" width="7.8" height="10.7" fill="#d0d0d0" stroke="#111" stroke-width="1.3"/><path d="M1880 459.5 L1885 464.5 L1890 459.5" fill="none" stroke="#333" stroke-width="1.3"/><path d="M1880 628.5 L1885 633.5 L1890 628.5" fill="none" stroke="#333" stroke-width="1.3"/><path d="M1880 659.5 L1885 664.5 L1890 659.5" fill="none" stroke="#333" stroke-width="1.3"/><path d="M1875 792 L1876.5 785 L1888 773.5 L1893 778.5 L1881.5 790 Z M1885.5 776 L1890.5 781" fill="none" stroke="#222" stroke-width="1.5" stroke-linejoin="round"/><path d="M1880 855.5 L1885 860.5 L1890 855.5" fill="none" stroke="#333" stroke-width="1.3"/><rect x="1782.6" y="205.4" width="60.9" height="41" rx="6" fill="none" stroke="#ff2e2e" stroke-width="4.7"/><rect x="1626.3" y="645.3" width="46.5" height="29" rx="6" fill="none" stroke="#ff2e2e" stroke-width="4.6"/><path d="M1808 160.2 L1808 180 L1813 180 L1813 184 L1798 184 L1798 180 L1803 180 L1803 166.6 L1798 168.5 L1798 164 Z" fill="#ff2e2e"/><line x1="1366" y1="884.5" x2="1909" y2="884.5" stroke="#555" stroke-width="1" stroke-dasharray="1 2"/><line x1="1366" y1="888.5" x2="1909" y2="888.5" stroke="#555" stroke-width="1" stroke-dasharray="1 2"/><g fill="none"><rect x="1513.5" y="904.5" width="246.5" height="66.5" stroke="#555" stroke-width="1.2"/><path d="M1513.5 1069.5 V1003.5 H1623.6 V1034 L1617.5 1040 L1630 1036.5 L1623.6 1042 V1069.5 H1513.5" stroke="#888" stroke-width="1.1"/><path d="M1760 1003.5 H1649.5 V1034 L1643.9 1040 L1656.4 1036.5 L1649.5 1042 V1069.5 H1760 V1003.5" stroke="#666" stroke-width="1.1"/><path d="M1562 953.5 L1724 927.5" stroke="#f4905a" stroke-width="2.4"/><path d="M1554 1055 H1611 V1016" stroke="#f4905a" stroke-width="2.2"/><path d="M1651 1053.5 H1744" stroke="#f4905a" stroke-width="2"/><path d="M1692 1075 H1716 M1711 1072 L1716 1075 L1711 1078" stroke="#f8a070" stroke-width="1.2"/><path d="M1515 990 H1561 M1561 982 V994 M1515 982 V994 M1724 990 H1760 M1724 982 V994 M1760 982 V994 M1737 927 V971 M1547 953 V971" stroke="#999" stroke-width="0.8"/><path d="M1515 1088 H1555 M1555 1079 V1092 M1515 1079 V1092 M1532 1055 V1070 M1727 1087 H1760 M1744 1053 V1070 M1741 1080 V1090 M1760 1080 V1090" stroke="#999" stroke-width="0.8"/></g><circle cx="1513.5" cy="904.5" r="2" fill="#fff" stroke="#999" stroke-width="0.8"/><circle cx="1637.5" cy="904.5" r="2" fill="#fff" stroke="#999" stroke-width="0.8"/><circle cx="1760" cy="904.5" r="2" fill="#fff" stroke="#999" stroke-width="0.8"/><circle cx="1513.5" cy="938" r="2" fill="#fff" stroke="#999" stroke-width="0.8"/><circle cx="1637.5" cy="938" r="2" fill="#fff" stroke="#999" stroke-width="0.8"/><circle cx="1760" cy="938" r="2" fill="#fff" stroke="#999" stroke-width="0.8"/><circle cx="1637.5" cy="971" r="2" fill="#fff" stroke="#999" stroke-width="0.8"/><circle cx="1513.5" cy="1003.5" r="2" fill="#fff" stroke="#999" stroke-width="0.8"/><circle cx="1513.5" cy="1037" r="2" fill="#fff" stroke="#999" stroke-width="0.8"/><circle cx="1513.5" cy="971" r="2.2" fill="#f4905a"/><circle cx="1760" cy="971" r="2.2" fill="#f4905a"/><circle cx="1513.5" cy="1069.5" r="2.2" fill="#f4905a"/></svg>
<div class="t" style="left:1579.5px;top:642.0px;font-size:33.5px;color:#ff2e2e;font-weight:bold;transform:scaleX(0.9);transform-origin:0 0">2</div>
<div class="t" style="left:1501.0px;top:904.7px;font-size:13px;color:#222;">4</div>
<div class="t" style="left:1639.0px;top:906.7px;font-size:13px;color:#222;">7</div>
<div class="t" style="left:1766.0px;top:904.7px;font-size:13px;color:#222;">3</div>
<div class="t" style="left:1501.0px;top:940.7px;font-size:13px;color:#222;">8</div>
<div class="t" style="left:1641.0px;top:938.7px;font-size:13px;color:#222;">0=9</div>
<div class="t" style="left:1766.0px;top:940.7px;font-size:13px;color:#222;">6</div>
<div class="t" style="left:1501.0px;top:972.7px;font-size:13px;color:#f4905a;">1</div>
<div class="t" style="left:1639.0px;top:974.7px;font-size:13px;color:#222;">5</div>
<div class="t" style="left:1766.0px;top:972.7px;font-size:13px;color:#f4905a;">2</div>
<div class="t" style="left:1703.0px;top:989.7px;font-size:13px;color:#222;">T</div>
<div class="t" style="left:1501.0px;top:1004.7px;font-size:13px;color:#222;">4</div>
<div class="t" style="left:1501.0px;top:1040.7px;font-size:13px;color:#222;">8</div>
<div class="t" style="left:1766.0px;top:1031.7px;font-size:13px;color:#222;">R</div>
<div class="t" style="left:1501.0px;top:1071.7px;font-size:13px;color:#f4905a;">1</div>
<div class="t" style="left:1703.0px;top:1078.7px;font-size:13px;color:#f4905a;">B</div>
<div class="t" style="left:1532.0px;top:954.7px;font-size:13px;color:#222;">Z</div>
<div class="t" style="left:1541.0px;top:960.7px;font-size:9px;color:#222;">1</div>
<div class="t" style="left:1530.0px;top:975.7px;font-size:13px;color:#222;">X</div>
<div class="t" style="left:1539.0px;top:981.7px;font-size:9px;color:#222;">1</div>
<div class="t" style="left:1740.0px;top:943.7px;font-size:13px;color:#222;">Z</div>
<div class="t" style="left:1749.0px;top:949.7px;font-size:9px;color:#222;">2</div>
<div class="t" style="left:1734.0px;top:975.7px;font-size:13px;color:#222;">X</div>
<div class="t" style="left:1743.0px;top:981.7px;font-size:9px;color:#222;">2</div>
<div class="t" style="left:1518.0px;top:1054.7px;font-size:13px;color:#222;">Z</div>
<div class="t" style="left:1527.0px;top:1060.7px;font-size:9px;color:#222;">1</div>
<div class="t" style="left:1526.0px;top:1072.7px;font-size:13px;color:#222;">X</div>
<div class="t" style="left:1535.0px;top:1078.7px;font-size:9px;color:#222;">1</div>
<div class="t" style="left:1717.0px;top:1054.7px;font-size:13px;color:#222;">c</div>
<div class="t" style="left:1727.0px;top:1074.7px;font-size:13px;color:#222;">c</div>
<div class="a" style="left:0px;top:1107px;width:1915px;height:40px;background:#000"></div>
<div class="t" style="left:2.0px;top:1121.5px;font-size:14.5px;color:#d8d8d8;">Design Code: <b style="color:#fff">EN</b></div>
<div class="t" style="left:133.0px;top:1121.5px;font-size:14.5px;color:#d8d8d8;">Rounding: <b style="color:#fff">Metric</b></div>
<div class="t" style="left:267.0px;top:1121.5px;font-size:14.5px;color:#d8d8d8;">Presentation Units: <b style="color:#fff">Metric</b></div>
</body></html>
